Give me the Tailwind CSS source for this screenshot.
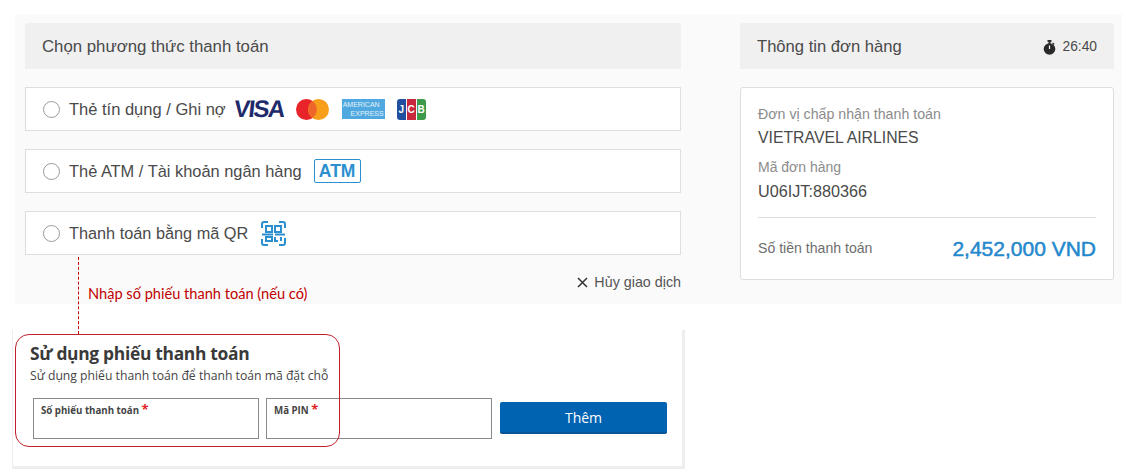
<!DOCTYPE html>
<html lang="en">
<head>
    <meta charset="UTF-8">
    <title>Thanh toán</title>
    <script src="https://cdn.jsdelivr.net/npm/@tailwindcss/browser@4"></script>
</head>
<body class="relative w-[1127px] h-[475px] overflow-hidden bg-white font-['Liberation_Sans',sans-serif]">

    <!-- Payment page -->
    <div class="mt-[14px] ml-[15px] w-[1107px] h-[290px] bg-[#fafafa] pt-[9px] pl-[10px] flex">

        <!-- Methods column -->
        <div class="w-[656px]">
            <div class="h-[46px] bg-[#f0f0f0] rounded-t-[3px] pl-[17px] pt-[1px] flex items-center text-[16.8px] text-[#4a4a4a]">Chọn phương thức thanh toán</div>

            <div class="mt-[18px] h-[44px] bg-white border border-[#dedede] pl-[17px] flex items-center text-[#4a4a4a] text-[16.5px]">
                <span class="size-[17px] rounded-full border-[1.5px] border-[#9a9a9a]"></span>
                <span class="ml-[9px]">Thẻ tín dụng / Ghi nợ</span>
                <span class="ml-[8px] w-[50px] -skew-x-6 font-bold text-[24px] leading-none tracking-[-1.5px] text-[#1f2a6b]">VISA</span>
                <svg class="ml-[12px]" width="33" height="21" viewBox="0 0 33 21">
                    <circle cx="10.5" cy="10.5" r="10.5" fill="#e8232a"/>
                    <circle cx="22.5" cy="10.5" r="10.5" fill="#f79e1b"/>
                    <path d="M16.5 2a10.5 10.5 0 0 1 0 17a10.5 10.5 0 0 1 0-17Z" fill="#f0662a"/>
                </svg>
                <span class="ml-[13px] w-[43px] h-[20px] bg-[#4fa8e0] text-white/85 text-[7px] leading-[9px] flex flex-col justify-center px-[1px]">
                    <span>AMERICAN</span>
                    <span class="text-right">EXPRESS</span>
                </span>
                <span class="ml-[12px] flex gap-[1px] text-white text-[10px] font-bold leading-[21px] text-center">
                    <span class="w-[9px] h-[21px] rounded-l-[3px] bg-[#1f4f9e]">J</span>
                    <span class="w-[9px] h-[21px] bg-[#c8283c]">C</span>
                    <span class="w-[9px] h-[21px] rounded-r-[3px] bg-[#3c9a4a]">B</span>
                </span>
            </div>

            <div class="mt-[18px] h-[44px] bg-white border border-[#dedede] pl-[17px] flex items-center text-[#4a4a4a] text-[16.4px]">
                <span class="size-[17px] rounded-full border-[1.5px] border-[#9a9a9a]"></span>
                <span class="ml-[9px]">Thẻ ATM / Tài khoản ngân hàng</span>
                <span class="ml-[12px] w-[47px] h-[24px] border-[1.5px] border-[#2b8fd0] rounded-[2px] flex items-center justify-center text-[#2b8fd0] font-bold text-[17.5px]">ATM</span>
            </div>

            <div class="mt-[18px] h-[44px] bg-white border border-[#dedede] pl-[17px] flex items-center text-[#4a4a4a] text-[16.3px]">
                <span class="size-[17px] rounded-full border-[1.5px] border-[#9a9a9a]"></span>
                <span class="ml-[9px]">Thanh toán bằng mã QR</span>
                <svg class="ml-[13px]" width="25" height="25" viewBox="0 0 25 25" fill="none" stroke="#2b8fd0" stroke-width="2">
                    <path d="M1 7V3a2 2 0 0 1 2-2h4M18 1h4a2 2 0 0 1 2 2v4M1 18v4a2 2 0 0 0 2 2h4M24 17v5a2 2 0 0 1-2 2h-4"/>
                    <rect x="5" y="5" width="6" height="6"/>
                    <rect x="14" y="5" width="6" height="6"/>
                    <rect x="5" y="16" width="6" height="4"/>
                    <path d="M1 13.5h11M14 13.5h10M14 16v4h3M20 16v4"/>
                </svg>
            </div>

            <div class="mt-[17px] flex justify-end items-center text-[14.3px] text-[#555555]">
                <svg width="11" height="11" viewBox="0 0 11 11" stroke="#333333" stroke-width="1.5"><path d="M1 1l9 9M10 1l-9 9"/></svg>
                <span class="ml-[6px]">Hủy giao dịch</span>
            </div>
        </div>

        <!-- Order column -->
        <div class="ml-[59px] w-[374px]">
            <div class="h-[46px] bg-[#f0f0f0] rounded-t-[3px] pl-[17px] pr-[17px] pt-[2px] flex items-center justify-between text-[#4a4a4a]">
                <span class="text-[16.6px]">Thông tin đơn hàng</span>
                <span class="flex items-center text-[13.8px]">
                    <svg width="13" height="15" viewBox="0 0 13 15" fill="#2a2a2a">
                        <rect x="4.5" y="0" width="4" height="1.8"/>
                        <rect x="5.5" y="1" width="2" height="3"/>
                        <path d="M10 2.5l1.6 1.4-1 1-1.5-1.3Z"/>
                        <circle cx="6.5" cy="9" r="5.8"/>
                        <path d="M6.5 9V5.5" stroke="#ffffff" stroke-width="1.2"/>
                    </svg>
                    <span class="ml-[6px]">26:40</span>
                </span>
            </div>
            <div class="mt-[18px] h-[193px] bg-white border border-[#dedede] rounded-[3px] px-[17px] pt-[18px]">
                <div class="text-[14.2px] leading-[17px] text-[#8c8c8c]">Đơn vị chấp nhận thanh toán</div>
                <div class="mt-[6px] text-[15.8px] leading-[18px] text-[#4a4a4a]">VIETRAVEL AIRLINES</div>
                <div class="mt-[12px] text-[14px] leading-[17px] text-[#8c8c8c]">Mã đơn hàng</div>
                <div class="mt-[6px] text-[16.2px] leading-[18px] text-[#4a4a4a]">U06IJT:880366</div>
                <div class="mt-[17px] border-t border-[#dedede] pt-[18px] flex items-center justify-between">
                    <span class="text-[14.1px] text-[#6e6e6e]">Số tiền thanh toán</span>
                    <span class="text-[21px] leading-[26px] text-[#2588cc] [-webkit-text-stroke:0.5px_#2588cc]">2,452,000 VND</span>
                </div>
            </div>
        </div>
    </div>

    <!-- Voucher panel -->
    <div class="mt-[26px] ml-[12px] w-[673px] h-[139px] bg-white border-r-[3px] border-b-[3px] border-l-[1px] border-[#eeeeee] pl-[17px] pt-[12px] font-['Open_Sans',sans-serif]">
        <div class="text-[17.4px] leading-[22px] font-bold text-[#3a3a3a] tracking-[-0.3px]">Sử dụng phiếu thanh toán</div>
        <div class="mt-[4px] text-[12.2px] leading-[16px] text-[#444444]">Sử dụng phiếu thanh toán để thanh toán mã đặt chỗ</div>
        <div class="mt-[14px] ml-[3px] flex">
            <div class="w-[226px] h-[41px] border border-[#8a8a8a] pl-[7px] pt-[3px] text-[9.7px] font-bold text-[#444444] leading-[14px]">Số phiếu thanh toán <span class="text-[#e02424] text-[13px]">*</span></div>
            <div class="ml-[7px] w-[226px] h-[41px] border border-[#8a8a8a] pl-[7px] pt-[3px] text-[9.7px] font-bold text-[#444444] leading-[14px]">Mã PIN <span class="text-[#e02424] text-[13px]">*</span></div>
            <button class="ml-[8px] w-[167px] h-[32px] mt-[4px] bg-[#0063b1] rounded-[2px] border-b-2 border-[#0a5596] text-white text-[14px]">Thêm</button>
        </div>
    </div>

    <!-- Annotation over the screenshot -->
    <div class="absolute left-[78px] top-[257px] h-[77px] border-l border-dashed border-[#c00000]"></div>
    <div class="absolute left-[88px] top-[285px] text-[14.6px] leading-[18px] text-[#c00000] font-['Lato',sans-serif]">Nhập số phiếu thanh toán (nếu có)</div>
    <div class="absolute left-[15px] top-[334px] w-[325px] h-[113px] border border-[#c0202a] rounded-[14px]"></div>

</body>
</html>
